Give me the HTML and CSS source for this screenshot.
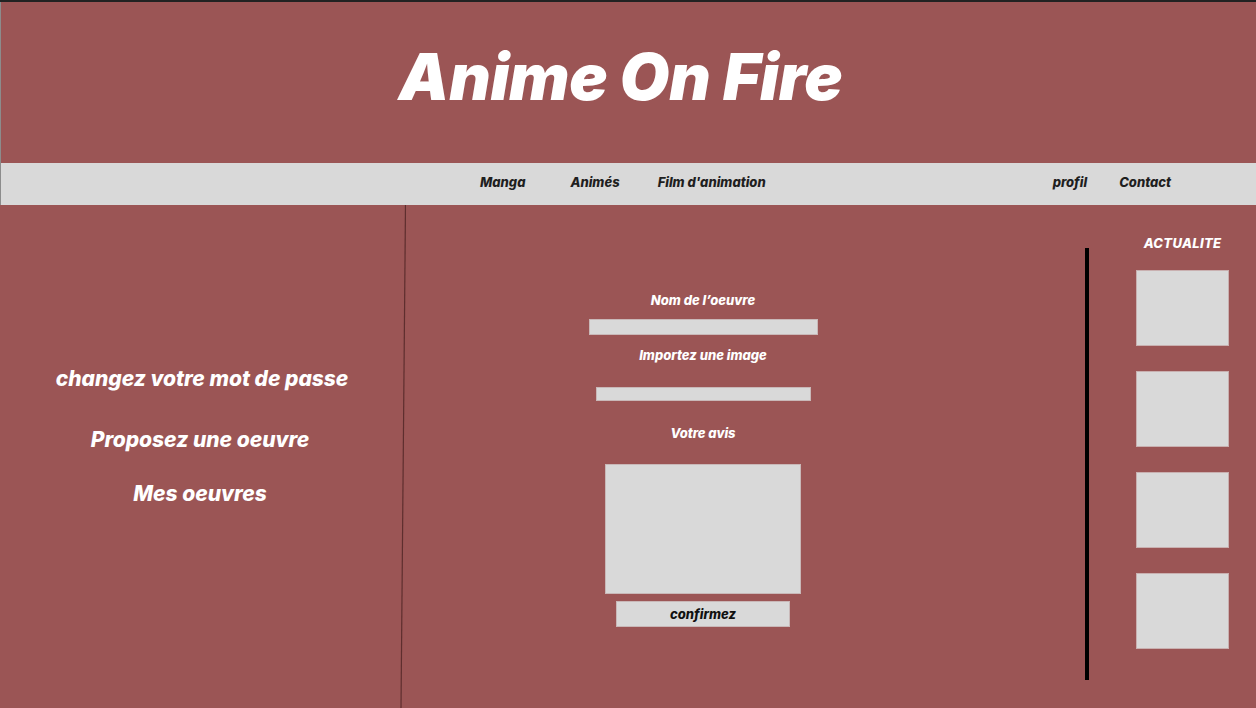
FILE: index.html
```html
<!DOCTYPE html>
<html lang="fr">
<head>
<meta charset="utf-8">
<title>Anime On Fire</title>
<link rel="stylesheet" href="styles.css">
</head>
<body>
<header class="header">
  <h1 class="title">Anime On Fire</h1>
</header>
<nav class="nav">
  <div class="nav-main">
    <a class="nav-link nav-manga">Manga</a>
    <a class="nav-link nav-animes">Animés</a>
    <a class="nav-link nav-film">Film d'animation</a>
  </div>
  <div class="nav-side">
    <a class="nav-link nav-profil">profil</a>
    <a class="nav-link nav-contact">Contact</a>
  </div>
</nav>
<main class="main">
  <aside class="left">
    <a class="left-link l1">changez votre mot de passe</a>
    <a class="left-link l2">Proposez une oeuvre</a>
    <a class="left-link l3">Mes oeuvres</a>
  </aside>
  <svg class="divider" width="6" height="503" viewBox="0 0 6 503"><line x1="5.5" y1="0" x2="1" y2="503" stroke="#5e2e2e" stroke-width="1.2"/></svg>
  <section class="center">
    <div class="form">
      <div class="label lab1">Nom de l’oeuvre</div>
      <div class="input in1"></div>
      <div class="label lab2">Importez une image</div>
      <div class="input in2"></div>
      <div class="label lab3">Votre avis</div>
      <div class="textarea"></div>
      <div class="button">confirmez</div>
    </div>
  </section>
  <section class="right">
    <div class="vline"></div>
    <div class="news">
      <div class="news-title">ACTUALITE</div>
      <div class="news-box"></div>
      <div class="news-box"></div>
      <div class="news-box"></div>
      <div class="news-box"></div>
    </div>
  </section>
</main>
</body>
</html>
```
FILE: styles.css
```css
* { box-sizing: border-box; }
html, body { margin: 0; padding: 0; }
body {
  width: 1256px;
  height: 708px;
  overflow: hidden;
  background: #9b5555;
  border-top: 2px solid #222;
  font-family: Inter, "Noto Sans", sans-serif;
  font-style: italic;
}
.header {
  height: 161px;
  display: flex;
  justify-content: center;
  align-items: flex-start;
  border-left: 1px solid #8c8c8c;
}
.title {
  margin: 36px 16px 0 0;
  font-size: 64px;
  line-height: 78px;
  font-weight: 900;
  color: #fff;
  letter-spacing: -0.3px;
}
.nav {
  height: 42px;
  background: #d9d9d9;
  border-left: 1px solid #8c8c8c;
  display: flex;
  align-items: center;
  padding-bottom: 4px;
  font-size: 13px;
  font-weight: 800;
  color: #1f1f1f;
}
.nav-link { display: block; line-height: 16px; }
.nav-main { display: flex; padding-left: 479px; }
.nav-animes { margin-left: 45px; }
.nav-film { margin-left: 38px; }
.nav-side { display: flex; margin-left: auto; padding-right: 85px; }
.nav-contact { margin-left: 32px; }
.main {
  height: 503px;
  display: flex;
}
.left {
  width: 400px;
  display: flex;
  flex-direction: column;
  align-items: center;
  color: #fff;
  font-size: 21px;
  font-weight: 800;
  line-height: 24px;
}
.left-link { display: block; }
.l1 { margin-top: 162px; margin-left: 4px; }
.l2 { margin-top: 37px; }
.l3 { margin-top: 30px; }
.divider { display: block; flex: none; }
.center {
  width: 594px;
  display: flex;
  justify-content: center;
}
.form {
  display: flex;
  flex-direction: column;
  align-items: center;
  padding-top: 87px;
}
.label {
  color: #fff;
  font-size: 13px;
  font-weight: 800;
  line-height: 16px;
}
.input { background: #d9d9d9; border: 1px solid #c9b8b8; }
.in1 { width: 229px; height: 16px; margin-top: 11px; }
.lab2 { margin-top: 12px; }
.in2 { width: 215px; height: 14px; margin-top: 24px; }
.lab3 { margin-top: 24px; }
.textarea {
  width: 196px; height: 130px; margin-top: 23px;
  background: #d9d9d9; border: 1px solid #c9b8b8;
}
.button {
  width: 174px; height: 26px; margin-top: 7px;
  background: #d9d9d9; border: 1px solid #c9b8b8;
  display: flex; align-items: center; justify-content: center;
  font-size: 13px; font-weight: 800; color: #111;
}
.right {
  flex: 1;
  display: flex;
  align-items: flex-start;
}
.vline {
  width: 4px;
  height: 432px;
  margin-left: 85px;
  margin-top: 43px;
  background: #000;
}
.news {
  width: 93px;
  margin-left: 47px;
  display: flex;
  flex-direction: column;
  align-items: center;
  padding-top: 30px;
}
.news-title {
  color: #fff;
  font-size: 13px;
  font-weight: 800;
  line-height: 16px;
  letter-spacing: 0.3px;
  margin-bottom: 19px;
  white-space: nowrap;
}
.news-box {
  width: 93px;
  height: 76px;
  background: #d9d9d9;
  border: 1px solid #c9b0b0;
  margin-bottom: 25px;
}
```
